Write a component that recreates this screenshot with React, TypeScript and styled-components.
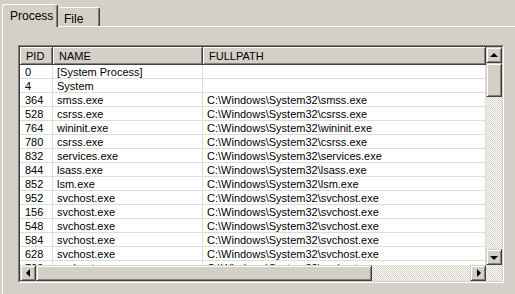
import React from 'react';
import styled, { createGlobalStyle } from 'styled-components';

const Global = createGlobalStyle`
  html, body { margin: 0; padding: 0; background: #d4d0c8; }
  body { font-family: "Liberation Sans", Arial, sans-serif; font-size: 11px; color: #000; }
`;

const Window = styled.div`
  width: 515px;
  height: 294px;
  overflow: hidden;
  background: #d4d0c8;
  display: flex;
  flex-direction: column;
`;

const TabStrip = styled.div`
  display: flex;
  align-items: flex-end;
  height: 26px;
  padding-left: 2px;
  flex: none;
`;

const Tab = styled.div<{ $active?: boolean; $w: number }>`
  box-sizing: border-box;
  width: ${(p) => p.$w}px;
  height: ${(p) => (p.$active ? 23 : 19)}px;
  margin-bottom: ${(p) => (p.$active ? -1 : 0)}px;
  position: relative;
  z-index: ${(p) => (p.$active ? 2 : 1)};
  background: #d4d0c8;
  border-top: 1px solid #fff;
  border-left: ${(p) => (p.$active ? '1px solid #fff' : 'none')};
  border-right: 1px solid #404040;
  box-shadow: inset -1px 0 #808080;
  border-radius: 3px 3px 0 0;
  font-size: 12px;
  line-height: 14px;
  padding: ${(p) => (p.$active ? '4px 0 0 7px' : '4px 0 0 6px')};
`;

const Panel = styled.div`
  flex: 1;
  margin-left: 2px;
  border-top: 1px solid #fff;
  border-left: 1px solid #fff;
  padding: 18px 0 0 15px;
`;

const ListOuter = styled.div`
  width: 486px;
  height: 238px;
  box-sizing: border-box;
  border: 1px solid;
  border-color: #808080 #fff #fff #808080;
`;

const ListInner = styled.div`
  height: 100%;
  box-sizing: border-box;
  border: 1px solid;
  border-color: #404040 #d4d0c8 #d4d0c8 #404040;
  display: grid;
  grid-template-columns: 466px 16px;
  grid-template-rows: 218px 16px;
  background: #fff;
`;

const MainArea = styled.div`
  display: flex;
  flex-direction: column;
  overflow: hidden;
`;

const COLS = '33px 150px 283px';

const HeaderRow = styled.div`
  display: grid;
  grid-template-columns: ${COLS};
  height: 18px;
  flex: none;
`;

const HeaderCell = styled.div`
  box-sizing: border-box;
  background: #d4d0c8;
  border-right: 1px solid #404040;
  border-bottom: 1px solid #404040;
  box-shadow: inset 1px 1px #fff, inset -1px -1px #808080;
  padding: 3px 0 0 6px;
  line-height: 13px;
  white-space: nowrap;
  overflow: hidden;
`;

const Body = styled.div`
  flex: 1;
  overflow: hidden;
  background: #fff;
`;

const Row = styled.div`
  display: grid;
  grid-template-columns: ${COLS};
  height: 14px;
`;

const Cell = styled.div<{ $pad: number }>`
  box-sizing: border-box;
  border-right: 1px solid #dcdcdc;
  border-bottom: 1px solid #dcdcdc;
  padding-left: ${(p) => p.$pad}px;
  line-height: 14px;
  white-space: nowrap;
  overflow: hidden;
`;

const Track = styled.div`
  background: repeating-conic-gradient(#d4d0c8 0 25%, #fff 0 50%) 0 0 / 2px 2px;
`;

const VScroll = styled(Track)`
  display: flex;
  flex-direction: column;
`;

const HScroll = styled(Track)`
  display: flex;
`;

const Corner = styled(Track)``;

const Btn = styled.div`
  box-sizing: border-box;
  width: 16px;
  height: 16px;
  flex: none;
  background: #d4d0c8;
  border: 1px solid;
  border-color: #d4d0c8 #404040 #404040 #d4d0c8;
  box-shadow: inset 1px 1px #fff, inset -1px -1px #808080;
  display: flex;
  align-items: center;
  justify-content: center;
`;

const Thumb = styled.div<{ $len: number; $vertical?: boolean }>`
  box-sizing: border-box;
  flex: none;
  ${(p) => (p.$vertical ? `height: ${p.$len}px;` : `width: ${p.$len}px;`)}
  background: #d4d0c8;
  border: 1px solid;
  border-color: #d4d0c8 #404040 #404040 #d4d0c8;
  box-shadow: inset 1px 1px #fff, inset -1px -1px #808080;
`;

const Spacer = styled.div`
  flex: 1;
`;

const Arrow = styled.div<{ $dir: 'up' | 'down' | 'left' | 'right' }>`
  width: 0;
  height: 0;
  ${(p) =>
    p.$dir === 'up'
      ? 'border-left: 4px solid transparent; border-right: 4px solid transparent; border-bottom: 4px solid #000; margin-top: -1px;'
      : p.$dir === 'down'
      ? 'border-left: 4px solid transparent; border-right: 4px solid transparent; border-top: 4px solid #000; margin-top: 1px;'
      : p.$dir === 'left'
      ? 'border-top: 4px solid transparent; border-bottom: 4px solid transparent; border-right: 4px solid #000; margin-left: -1px;'
      : 'border-top: 4px solid transparent; border-bottom: 4px solid transparent; border-left: 4px solid #000; margin-left: 1px;'}
`;

const SYS = 'C:\\Windows\\System32\\';
const rows: [string, string, string][] = [
  ['0', '[System Process]', ''],
  ['4', 'System', ''],
  ['364', 'smss.exe', SYS + 'smss.exe'],
  ['528', 'csrss.exe', SYS + 'csrss.exe'],
  ['764', 'wininit.exe', SYS + 'wininit.exe'],
  ['780', 'csrss.exe', SYS + 'csrss.exe'],
  ['832', 'services.exe', SYS + 'services.exe'],
  ['844', 'lsass.exe', SYS + 'lsass.exe'],
  ['852', 'lsm.exe', SYS + 'lsm.exe'],
  ['952', 'svchost.exe', SYS + 'svchost.exe'],
  ['156', 'svchost.exe', SYS + 'svchost.exe'],
  ['548', 'svchost.exe', SYS + 'svchost.exe'],
  ['584', 'svchost.exe', SYS + 'svchost.exe'],
  ['628', 'svchost.exe', SYS + 'svchost.exe'],
  ['700', 'svchost.exe', SYS + 'svchost.exe'],
];

export default function App() {
  return (
    <>
      <Global />
      <Window>
        <TabStrip>
          <Tab $active $w={56}>Process</Tab>
          <Tab $w={42}>File</Tab>
        </TabStrip>
        <Panel>
          <ListOuter>
            <ListInner>
              <MainArea>
                <HeaderRow>
                  <HeaderCell>PID</HeaderCell>
                  <HeaderCell>NAME</HeaderCell>
                  <HeaderCell>FULLPATH</HeaderCell>
                </HeaderRow>
                <Body>
                  {rows.map(([pid, name, path], i) => (
                    <Row key={i}>
                      <Cell $pad={5}>{pid}</Cell>
                      <Cell $pad={4}>{name}</Cell>
                      <Cell $pad={4}>{path}</Cell>
                    </Row>
                  ))}
                </Body>
              </MainArea>
              <VScroll>
                <Btn><Arrow $dir="up" /></Btn>
                <Thumb $vertical $len={34} />
                <Spacer />
                <Btn><Arrow $dir="down" /></Btn>
              </VScroll>
              <HScroll>
                <Btn><Arrow $dir="left" /></Btn>
                <Thumb $len={336} />
                <Spacer />
                <Btn><Arrow $dir="right" /></Btn>
              </HScroll>
              <Corner />
            </ListInner>
          </ListOuter>
        </Panel>
      </Window>
    </>
  );
}
